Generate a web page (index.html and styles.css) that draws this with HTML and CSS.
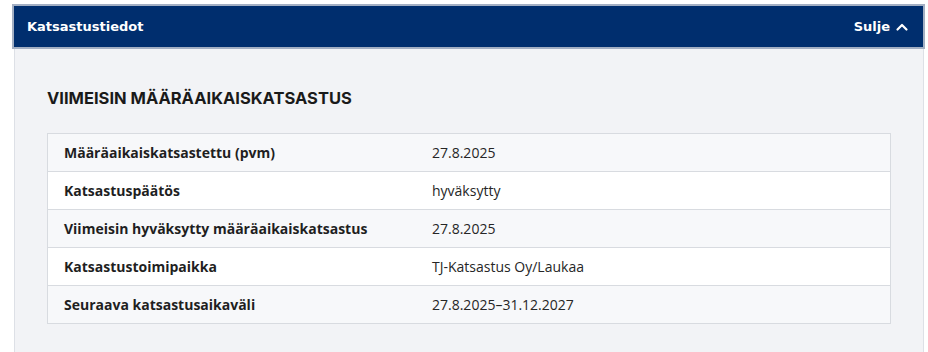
FILE: index.html
```html
<!DOCTYPE html>
<html lang="fi">
<head>
<meta charset="utf-8">
<title>Katsastustiedot</title>
<link rel="stylesheet" href="styles.css">
</head>
<body>
<div class="page">
  <section class="panel">
    <button class="panel-header" type="button">
      <span class="panel-title">Katsastustiedot</span>
      <span class="toggle">Sulje
        <svg class="chev" width="14" height="14" viewBox="0 0 14 14" aria-hidden="true"><path d="M2.5 9.5 L7 5 L11.5 9.5" fill="none" stroke="#fff" stroke-width="2.2" stroke-linecap="round" stroke-linejoin="round"/></svg>
      </span>
    </button>
    <div class="panel-body">
      <h2 class="section-title">VIIMEISIN MÄÄRÄAIKAISKATSASTUS</h2>
      <div class="info-table">
        <div class="row"><div class="label">Määräaikaiskatsastettu (pvm)</div><div class="value">27.8.2025</div></div>
        <div class="row"><div class="label">Katsastuspäätös</div><div class="value">hyväksytty</div></div>
        <div class="row"><div class="label">Viimeisin hyväksytty määräaikaiskatsastus</div><div class="value">27.8.2025</div></div>
        <div class="row"><div class="label">Katsastustoimipaikka</div><div class="value">TJ-Katsastus Oy/Laukaa</div></div>
        <div class="row"><div class="label">Seuraava katsastusaikaväli</div><div class="value">27.8.2025–31.12.2027</div></div>
      </div>
    </div>
  </section>
</div>
</body>
</html>
```
FILE: styles.css
```css
html, body {
  margin: 0;
  padding: 0;
  background: #ffffff;
}
body {
  font-family: "Open Sans", "Noto Sans", sans-serif;
  color: #222;
}
.page {
  padding: 4px 3px 0 12px;
}
.panel {
  display: flex;
  flex-direction: column;
}
.panel-header {
  display: flex;
  align-items: center;
  justify-content: space-between;
  height: 45px;
  margin: 0;
  padding: 0 14px 0 13px;
  border: 2px solid #a3afc3;
  background: #002e6e;
  color: #fff;
  font-family: "DejaVu Sans", sans-serif;
  font-weight: 700;
  font-size: 13px;
  cursor: pointer;
  box-sizing: border-box;
  width: 100%;
}
.toggle {
  display: flex;
  align-items: center;
  gap: 5px;
}
.chev {
  display: block;
}
.panel-body {
  margin: 0 1px 0 2px;
  border-left: 1px solid #dde0e6;
  border-right: 1px solid #dde0e6;
  background: #f2f3f6;
  padding: 38px 32px 28px 32px;
  height: 303px;
  box-sizing: border-box;
}
.section-title {
  margin: 0 0 24px 0;
  font-family: "Inter", sans-serif;
  font-weight: 700;
  font-size: 16.5px;
  letter-spacing: 0;
  color: #1a1a1a;
  line-height: 22px;
}
.info-table {
  border: 1px solid #d8dbe0;
  background: #fff;
}
.row {
  display: grid;
  grid-template-columns: 368px 1fr;
  height: 38px;
  align-items: center;
  border-top: 1px solid #d8dbe0;
  box-sizing: border-box;
  font-size: 14px;
}
.row:first-child {
  border-top: none;
  height: 37px;
}
.row:nth-child(odd) {
  background: #f7f8fa;
}
.label {
  padding-left: 16px;
  font-weight: 700;
  color: #1f1f1f;
}
.value {
  padding-left: 16px;
  color: #262626;
}
```
